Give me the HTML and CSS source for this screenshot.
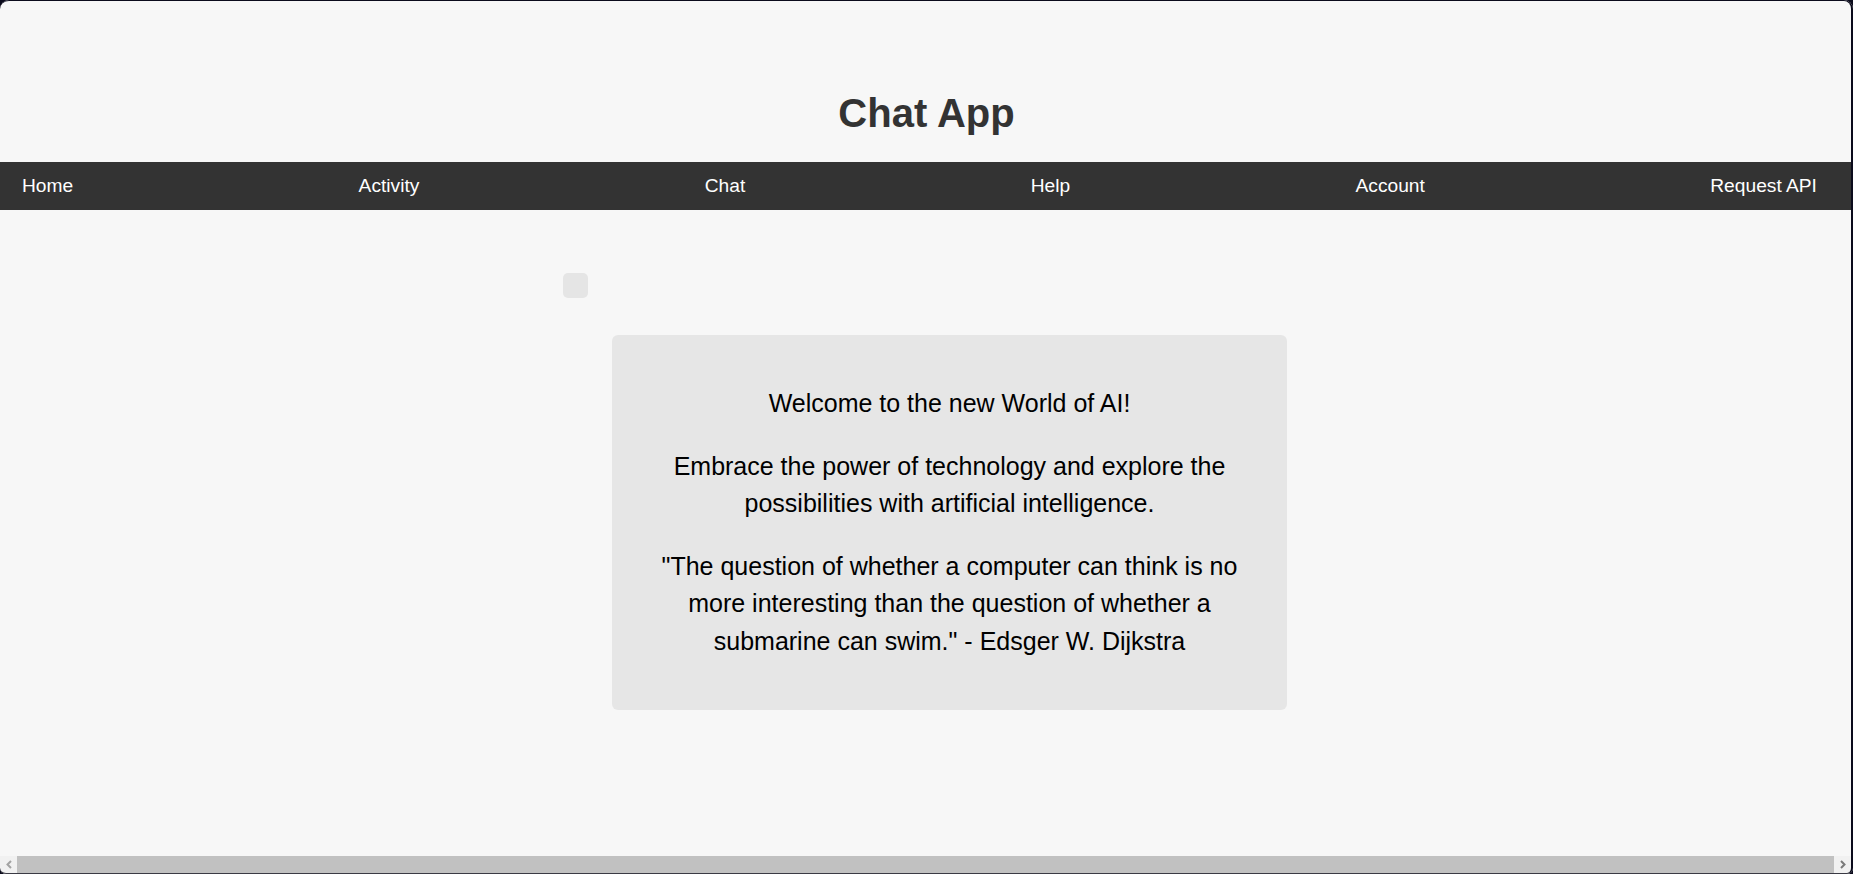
FILE: index.html
```html
<!DOCTYPE html>
<html lang="en">
<head>
<meta charset="utf-8">
<title>Chat App</title>
<link rel="stylesheet" href="styles.css">
</head>
<body>
<header class="site-header">
  <h1 class="site-title">Chat App</h1>
</header>
<nav class="main-nav">
  <ul class="nav-list">
    <li><a href="#">Home</a></li>
    <li><a href="#">Activity</a></li>
    <li><a href="#">Chat</a></li>
    <li><a href="#">Help</a></li>
    <li><a href="#">Account</a></li>
    <li><a href="#">Request API</a></li>
  </ul>
</nav>
<main class="chat-main">
  <div class="chat-container">
    <div class="chat-log"></div>
    <section class="welcome-card">
      <p>Welcome to the new World of AI!</p>
      <p>Embrace the power of technology and explore the possibilities with artificial intelligence.</p>
      <p>"The question of whether a computer can think is no more interesting than the question of whether a submarine can swim." - Edsger W. Dijkstra</p>
    </section>
  </div>
</main>
<div class="hscrollbar">
  <span class="sb-btn">
    <svg width="8" height="9" viewBox="0 0 8 9"><path d="M6 1 L2.5 4.5 L6 8" fill="none" stroke="#a3a3a3" stroke-width="2"/></svg>
  </span>
  <span class="sb-thumb"></span>
  <span class="sb-btn">
    <svg width="8" height="9" viewBox="0 0 8 9"><path d="M2 1 L5.5 4.5 L2 8" fill="none" stroke="#7a7a7a" stroke-width="2"/></svg>
  </span>
</div>
<div class="window-frame"></div>
</body>
</html>
```

FILE: styles.css
```css
html, body {
  margin: 0;
  padding: 0;
}

body {
  background: #f7f7f7;
  font-family: "Liberation Sans", Arial, sans-serif;
  color: #000;
  min-height: 100vh;
}

.site-header {
  padding: 90px 0 26px;
}

.site-title {
  margin: 0;
  text-align: center;
  font-size: 40px;
  line-height: 46px;
  font-weight: bold;
  color: #333;
}

.main-nav {
  background: #333;
}

.nav-list {
  list-style: none;
  margin: 0;
  padding: 0 36px 0 22px;
  display: flex;
  justify-content: space-between;
  height: 48px;
  align-items: center;
}

.nav-list a {
  color: #fff;
  text-decoration: none;
  font-size: 19.2px;
  line-height: 48px;
}

.chat-main {
  padding-top: 63px;
}

.chat-container {
  width: 727px;
  margin: 0 auto;
}

.chat-log {
  width: 25px;
  height: 25px;
  border-radius: 5px;
  background: #e5e5e5;
}

.welcome-card {
  box-sizing: border-box;
  width: 675px;
  margin: 37px 0 0 49px;
  padding: 25px;
  background: #e6e6e6;
  border-radius: 6px;
  text-align: center;
  font-size: 25px;
  line-height: 37.5px;
  color: #000;
}

.welcome-card p {
  margin: 25px 0;
}

.hscrollbar {
  position: fixed;
  left: 0;
  right: 2px;
  bottom: 1px;
  height: 17px;
  display: flex;
  background: #f1f1f1;
}

.sb-btn {
  width: 17px;
  display: flex;
  align-items: center;
  justify-content: center;
  background: #f1f1f1;
}

.sb-thumb {
  flex: 1;
  background: #c1c1c1;
}

.window-frame {
  position: fixed;
  inset: 0;
  border-top: 1px solid #0b0b1c;
  border-right: 2px solid #0b0b1c;
  border-bottom: 1px solid #3a3a44;
  border-radius: 9px 9px 6px 6px;
  box-shadow: 0 0 0 12px #0b0b1c;
  pointer-events: none;
}
```
